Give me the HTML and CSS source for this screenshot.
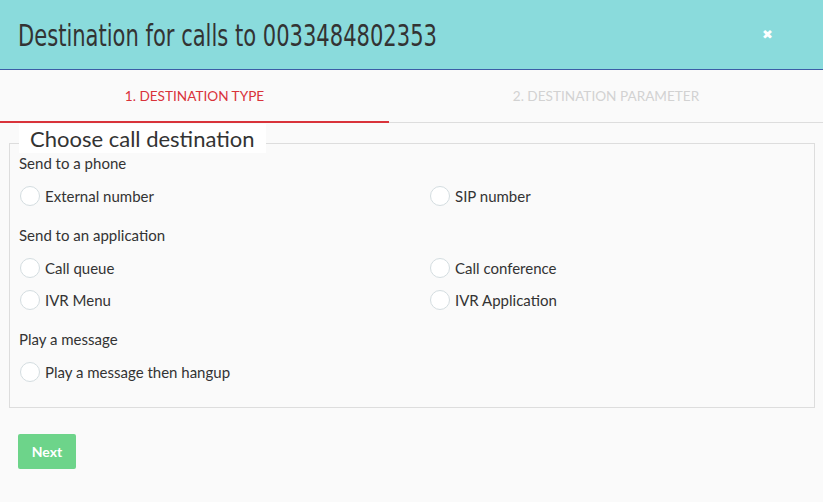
FILE: index.html
```html
<!DOCTYPE html>
<html>
<head>
<meta charset="utf-8">
<link rel="stylesheet" href="styles.css">
</head>
<body>
<div class="modal">
  <header class="modal-header">
    <h1 class="title">Destination for calls to 0033484802353</h1>
    <span class="close">&#10006;</span>
  </header>
  <nav class="tabs">
    <div class="tab active">1. Destination type</div>
    <div class="tab">2. Destination parameter</div>
  </nav>
  <div class="content">
    <fieldset class="group">
      <legend class="legend">Choose call destination</legend>
      <div class="section-label first">Send to a phone</div>
      <div class="options">
        <label class="option"><span class="radio"></span>External number</label>
        <label class="option"><span class="radio"></span>SIP number</label>
      </div>
      <div class="section-label">Send to an application</div>
      <div class="options">
        <label class="option"><span class="radio"></span>Call queue</label>
        <label class="option"><span class="radio"></span>Call conference</label>
        <label class="option"><span class="radio"></span>IVR Menu</label>
        <label class="option"><span class="radio"></span>IVR Application</label>
      </div>
      <div class="section-label">Play a message</div>
      <div class="options">
        <label class="option"><span class="radio"></span>Play a message then hangup</label>
      </div>
    </fieldset>
    <button class="btn-next">Next</button>
  </div>
</div>
</body>
</html>
```
FILE: styles.css
```css
html, body {
  margin: 0;
  padding: 0;
  background: #fafafa;
  font-family: Lato, "Open Sans", sans-serif;
  color: #333;
}
.modal-header {
  height: 69px;
  background: #8adbdc;
  border-bottom: 1px solid #3d5da6;
  display: flex;
  align-items: center;
  justify-content: space-between;
  padding: 0 50px 0 18px;
}
.title {
  margin: 0;
  font-family: "DejaVu Sans Condensed", "DejaVu Sans", sans-serif;
  font-stretch: condensed;
  font-weight: normal;
  font-size: 31px;
  color: #333;
  white-space: nowrap;
  transform: scaleX(0.755);
  transform-origin: left center;
}
.close {
  color: #fff;
  font-size: 13px;
  font-weight: bold;
  font-family: "DejaVu Sans", sans-serif;
}
.tabs {
  display: grid;
  grid-template-columns: 389px 1fr;
  border-bottom: 1px solid #ddd;
  height: 52px;
}
.tab {
  display: flex;
  align-items: center;
  justify-content: center;
  text-transform: uppercase;
  font-size: 13.6px;
  color: #d2d2d2;
}
.tab.active {
  color: #d9333a;
  border-bottom: 2px solid #d9333a;
  margin-bottom: -1px;
}
.content {
  padding: 1px 8px 0 9px;
}
.group {
  margin: 0;
  border: 1px solid #ddd;
  padding: 0 9px 19px 9px;
  min-width: 0;
}
.legend {
  background: linear-gradient(#fff 29px, transparent 29px);
  font-size: 22px;
  padding: 0 11px 10px 11px;
  margin: 0;
  line-height: 29px;
  color: #333;
}
.section-label {
  font-size: 15px;
  line-height: 20px;
  margin-top: 13px;
  margin-bottom: 7px;
}
.section-label.first {
  margin-top: -10px;
}
.options {
  display: grid;
  grid-template-columns: 410px 1fr;
}
.option {
  display: flex;
  align-items: center;
  height: 32px;
  font-size: 15px;
  color: #333;
}
.radio {
  width: 20px;
  height: 20px;
  box-sizing: border-box;
  border: 1px solid #d4dde0;
  border-radius: 50%;
  background: #fff;
  margin: 0 5px 0 1px;
}
.btn-next {
  margin: 26px 0 0 9px;
  width: 58px;
  height: 35px;
  border: none;
  border-radius: 2px;
  background: #6dd48a;
  color: #fff;
  font-family: Lato, sans-serif;
  font-weight: bold;
  font-size: 14px;
}
```
